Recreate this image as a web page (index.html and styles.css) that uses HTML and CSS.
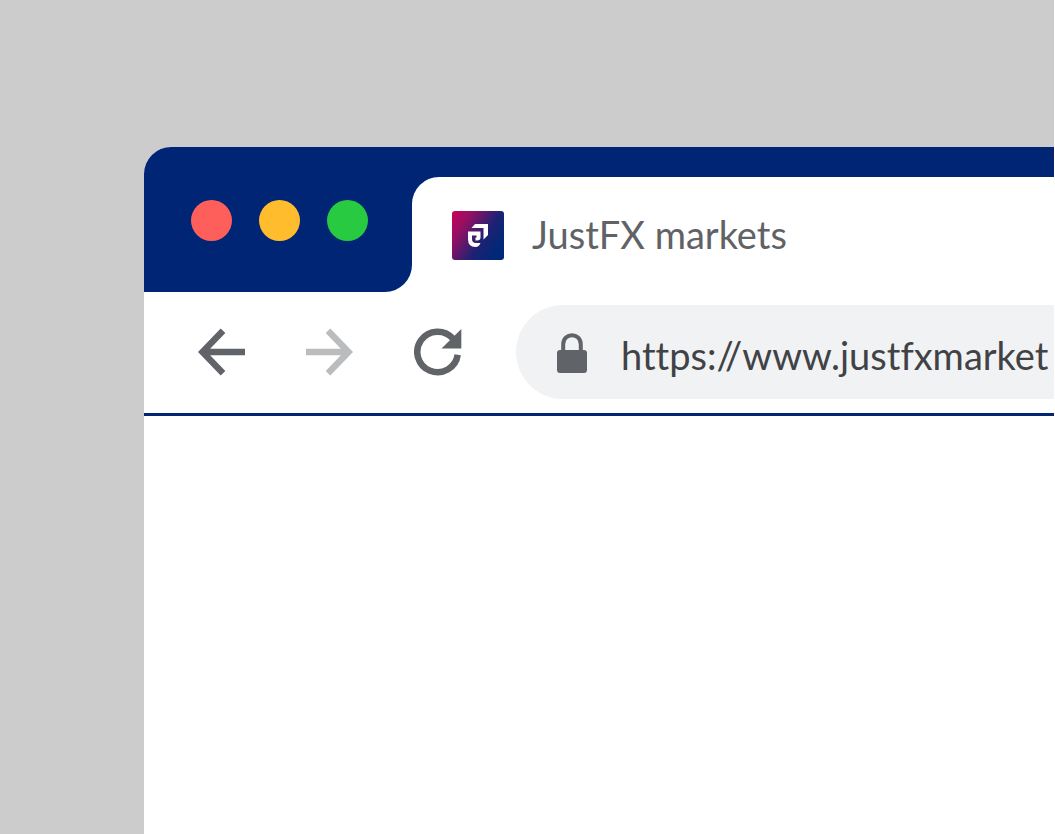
FILE: index.html
```html
<!DOCTYPE html>
<html lang="en">
<head>
<meta charset="utf-8">
<meta name="viewport" content="width=device-width, initial-scale=1">
<title>JustFX markets</title>
<link rel="stylesheet" href="styles.css">
</head>
<body>
<main class="desktop">
  <section class="window">
    <header class="titlebar">
      <div class="controls">
        <button class="dot dot-close" aria-label="Close"></button>
        <button class="dot dot-minimize" aria-label="Minimize"></button>
        <button class="dot dot-zoom" aria-label="Zoom"></button>
      </div>
      <div class="tabs">
        <div class="tab">
          <svg class="favicon" viewBox="0 0 52 49" aria-hidden="true">
            <defs>
              <linearGradient id="brand" x1="0" y1="0" x2="1" y2="0.6">
                <stop offset="0" stop-color="#c9005a"/>
                <stop offset="0.28" stop-color="#960f62"/>
                <stop offset="0.7" stop-color="#1c2273"/>
                <stop offset="1" stop-color="#002878"/>
              </linearGradient>
            </defs>
            <rect width="52" height="49" rx="3" fill="url(#brand)"/>
            <path d="M23 13H36V24L31.500 28.500V17H19.500Z" fill="#fff"/>
            <path d="M16 20.500H28.500V26.500Q28.500 29.500 25 29.500H23.500V26.500H24.500V24.500H20V28Q20 32 24 32H28.500Q27 36 23.500 36Q16 36 16 28Z" fill="#fff"/>
          </svg>
          <span class="tab-title">JustFX markets</span>
        </div>
      </div>
    </header>
    <nav class="toolbar">
      <div class="nav-buttons">
        <button class="nav-button" aria-label="Back">
          <svg class="icon" viewBox="0 0 48 48" fill="none" stroke="#606368" stroke-width="6.500"><path d="M25 2.700L4.500 24L25 45.300M4.500 24H47"/></svg>
        </button>
        <button class="nav-button" aria-label="Forward" disabled>
          <svg class="icon" viewBox="0 0 48 48" fill="none" stroke="#babcbe" stroke-width="6.500"><path d="M22 2.700L42.500 24L22 45.300M42.500 24H0"/></svg>
        </button>
        <button class="nav-button" aria-label="Reload">
          <svg class="icon" viewBox="0 0 48 48"><path d="M43.700 26.800A20.300 20.300 0 1 1 39 10.700" fill="none" stroke="#606368" stroke-width="6.500"/><path d="M47.300 1V20.500H27.500Z" fill="#606368"/></svg>
        </button>
      </div>
      <div class="address">
        <svg class="lock" viewBox="0 0 30 40" aria-hidden="true"><path d="M6.200 19V11.500C6.200 -0.800 23.800 -0.800 23.800 11.500V19" fill="none" stroke="#606368" stroke-width="4"/><rect y="17" width="30" height="23" rx="3" fill="#606368"/></svg>
        <input class="url" type="text" aria-label="Address" value="https://www.justfxmarket">
      </div>
    </nav>
  </section>
</main>
</body>
</html>
```
FILE: styles.css
```css
* {
  box-sizing: border-box;
}

body {
  margin: 0;
  padding-right: 1px;
  background: #fff;
  font-family: Lato, "Open Sans", sans-serif;
}

button {
  padding: 0;
  border: 0;
  background: none;
}

.desktop {
  display: flex;
  min-height: 100vh;
  padding: 147px 0 0 144px;
  background: #ccc;
  overflow: hidden;
}

.window {
  flex: 1;
  min-width: 0;
  background: #fff;
  border-top-left-radius: 27px;
  overflow: hidden;
}

.titlebar {
  display: flex;
}

.controls {
  display: flex;
  align-items: center;
  gap: 27px;
  padding: 53px 44px 51px 47px;
  background: #002575;
  border-bottom-right-radius: 27px;
}

.dot {
  width: 41px;
  height: 41px;
  border-radius: 50%;
}

.dot-close {
  background: #ff5f5a;
}

.dot-minimize {
  background: #ffbd2e;
}

.dot-zoom {
  background: #28ca41;
}

.tabs {
  flex: 1;
  min-width: 0;
  padding-top: 30px;
  background: linear-gradient(#002575 58px, #fff 58px);
}

.tab {
  display: flex;
  align-items: center;
  gap: 28px;
  height: 115px;
  padding: 2px 0 0 40px;
  background: #fff;
  border-top-left-radius: 27px;
}

.favicon {
  width: 52px;
  height: 49px;
}

.tab-title {
  padding-bottom: 4px;
  color: #606266;
  font-size: 38px;
  line-height: 48px;
  white-space: nowrap;
}

.toolbar {
  display: flex;
  align-items: center;
  gap: 54px;
  padding: 13px 0 14px 54px;
  border-bottom: 3px solid #002575;
}

.nav-buttons {
  display: flex;
  gap: 60px;
}

.nav-button {
  width: 48px;
  height: 48px;
}

.icon {
  display: block;
  width: 48px;
  height: 48px;
}

.address {
  display: flex;
  flex: 1;
  align-items: center;
  gap: 34px;
  min-width: 0;
  height: 94px;
  padding-left: 41px;
  background: #f1f2f4;
  border-radius: 47px 0 0 47px;
}

.lock {
  flex: none;
  width: 30px;
  height: 40px;
  margin-top: 2px;
}

.url {
  flex: 1;
  min-width: 0;
  padding: 6px 0 0;
  border: 0;
  outline: 0;
  background: none;
  color: #414246;
  font: 38px/48px Lato, "Open Sans", sans-serif;
  font-variant-ligatures: none;
}
```
